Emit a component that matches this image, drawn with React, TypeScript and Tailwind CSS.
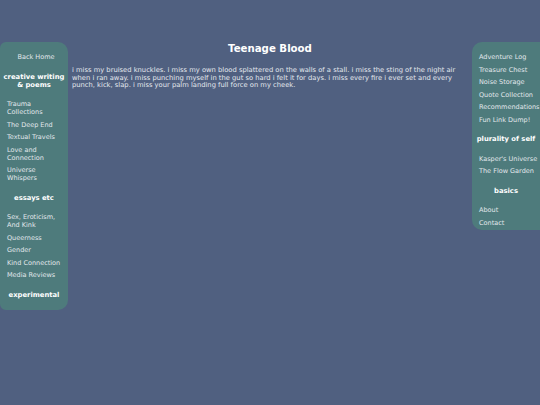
import React from "react";

const Item = ({ children }: { children: React.ReactNode }) => (
  <div className="leading-[8px] text-[6.5px] text-[#e2e8ec] whitespace-nowrap pl-[7px]">{children}</div>
);
const Head = ({ children }: { children: React.ReactNode }) => (
  <div className="leading-[8px] text-[6.8px] font-bold text-white text-center py-[7px] whitespace-nowrap">{children}</div>
);

export default function App() {
  return (
    <div
      className="w-[540px] h-[405px] bg-[#506080] flex items-start pt-[42px] overflow-hidden"
      style={{ fontFamily: '"DejaVu Sans", Verdana, sans-serif' }}
    >
      <div className="w-[68px] shrink-0 bg-[#4e7b7c] rounded-r-[10px] rounded-l-[6px] pt-[11px] pb-[4px] flex flex-col gap-[4.5px]">
        <div className="text-center leading-[8px] text-[6.5px] text-[#e2e8ec] pl-[4px]">Back Home</div>
        <Head>creative writing<br />&amp; poems</Head>
        <Item>Trauma<br />Collections</Item>
        <Item>The Deep End</Item>
        <Item>Textual Travels</Item>
        <Item>Love and<br />Connection</Item>
        <Item>Universe<br />Whispers</Item>
        <Head>essays etc</Head>
        <Item>Sex, Eroticism,<br />And Kink</Item>
        <Item>Queerness</Item>
        <Item>Gender</Item>
        <Item>Kind Connection</Item>
        <Item>Media Reviews</Item>
        <Head>experimental</Head>
      </div>
      <div className="flex-1 px-[4px]">
        <h1 className="text-center text-white font-bold text-[10.2px] leading-[12px] mt-[1px]">Teenage Blood</h1>
        <p className="mt-[12px] text-[6.75px] leading-[7.6px] text-[#e4e8ee]">
          i miss my bruised knuckles. i miss my own blood splattered on the walls of a stall. i miss the sting of the night air when i ran away. i miss punching myself in the gut so hard i felt it for days. i miss every fire i ever set and every punch, kick, slap. i miss your palm landing full force on my cheek.
        </p>
      </div>
      <div className="w-[68px] shrink-0 bg-[#4e7b7c] rounded-l-[10px] pt-[11px] pb-[3px] flex flex-col gap-[4.5px]">
        <Item>Adventure Log</Item>
        <Item>Treasure Chest</Item>
        <Item>Noise Storage</Item>
        <Item>Quote Collection</Item>
        <Item>Recommendations</Item>
        <Item>Fun Link Dump!</Item>
        <Head>plurality of self</Head>
        <Item>Kasper's Universe</Item>
        <Item>The Flow Garden</Item>
        <Head>basics</Head>
        <Item>About</Item>
        <Item>Contact</Item>
      </div>
    </div>
  );
}
